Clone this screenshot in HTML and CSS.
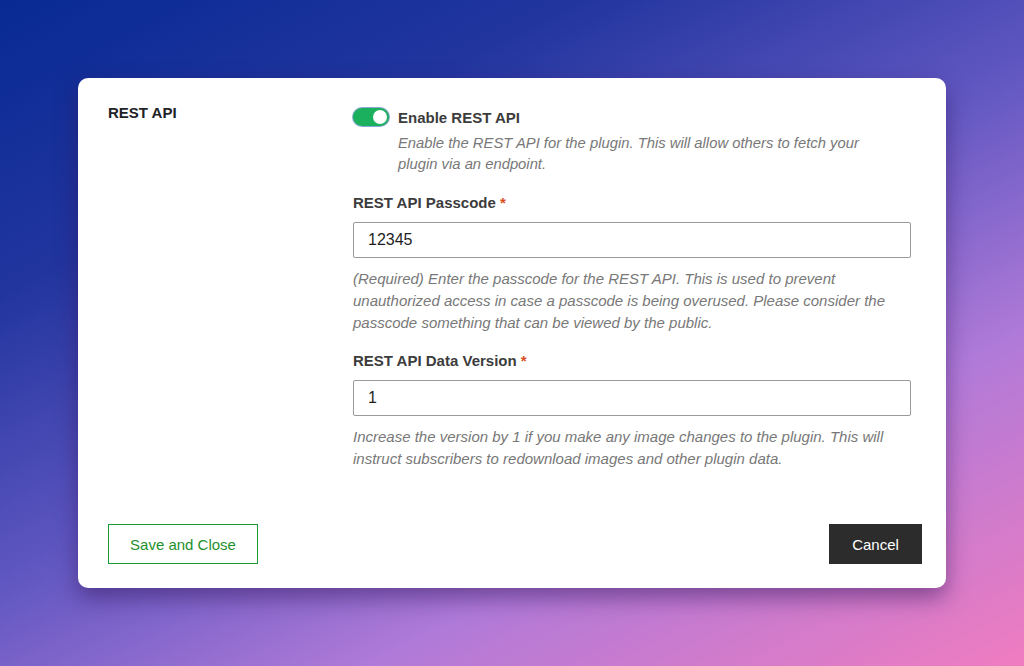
FILE: index.html
```html
<!DOCTYPE html>
<html lang="en">
<head>
<meta charset="utf-8">
<title>REST API settings</title>
<link rel="stylesheet" href="styles.css">
</head>
<body>
<div class="card">
  <div class="settings">
    <div class="section-title">REST API</div>
    <div class="fields">
      <div class="toggle-row">
        <span class="toggle"><span class="knob"></span></span>
        <span class="toggle-label">Enable REST API</span>
      </div>
      <p class="help help-toggle">Enable the REST API for the plugin. This will allow others to fetch your<br>plugin via an endpoint.</p>

      <label class="field-label">REST API Passcode <span class="req">*</span></label>
      <div class="input"><span>12345</span></div>
      <p class="help">(Required) Enter the passcode for the REST API. This is used to prevent<br>unauthorized access in case a passcode is being overused. Please consider the<br>passcode something that can be viewed by the public.</p>

      <label class="field-label second">REST API Data Version <span class="req">*</span></label>
      <div class="input"><span>1</span></div>
      <p class="help">Increase the version by 1 if you make any image changes to the plugin. This will<br>instruct subscribers to redownload images and other plugin data.</p>
    </div>
  </div>
  <div class="footer">
    <button class="btn btn-save">Save and Close</button>
    <button class="btn btn-cancel">Cancel</button>
  </div>
</div>
</body>
</html>
```

FILE: styles.css
```css
html, body {
  margin: 0;
  padding: 0;
}
body {
  width: 1024px;
  height: 666px;
  display: flex;
  align-items: center;
  justify-content: center;
  font-family: "Liberation Sans", Arial, sans-serif;
  background: linear-gradient(153deg, #082a93 0%, #22359f 25%, #6258c2 50%, #b07ad8 72%, #f07cc0 100%);
  overflow: hidden;
}
.card {
  box-sizing: border-box;
  width: 868px;
  height: 510px;
  background: #fff;
  border-radius: 10px;
  box-shadow: 0 10px 22px rgba(50, 20, 90, 0.5);
  padding: 25px 24px 24px 30px;
  display: flex;
  flex-direction: column;
}
.settings {
  display: grid;
  grid-template-columns: 245px 558px;
}
.section-title {
  font-size: 15px;
  font-weight: bold;
  line-height: 20px;
  color: #1d2327;
}
.fields {
  padding-top: 4px;
}
.toggle-row {
  display: flex;
  align-items: center;
  gap: 9px;
  height: 20px;
}
.toggle {
  box-sizing: border-box;
  width: 36px;
  height: 18px;
  border-radius: 9px;
  background: #1bb05d;
  box-shadow: 0 0 0 1px rgba(40, 100, 170, 0.55);
  display: flex;
  align-items: center;
  justify-content: flex-end;
  padding-right: 2px;
}
.knob {
  width: 14px;
  height: 14px;
  border-radius: 50%;
  background: #fff;
}
.toggle-label {
  font-size: 15px;
  font-weight: bold;
  color: #3c3c3c;
}
.help {
  margin: 0;
  font-size: 15px;
  font-style: italic;
  line-height: 22px;
  color: #787878;
  white-space: nowrap;
}
.help-toggle {
  margin-top: 6px;
  margin-left: 45px;
  line-height: 21px;
  font-size: 14.8px;
}
.field-label {
  display: block;
  margin-top: 18px;
  font-size: 15px;
  font-weight: bold;
  line-height: 20px;
  color: #3c3c3c;
}
.field-label.second {
  margin-top: 17px;
}
.req {
  color: #d9501e;
  font-size: 15px;
}
.input {
  box-sizing: border-box;
  margin-top: 9px;
  height: 36px;
  border: 1px solid #9a9a9a;
  border-radius: 2px;
  padding: 0 14px;
  display: flex;
  align-items: center;
  font-size: 16px;
  color: #1e1e1e;
  margin-bottom: 10px;
}
.footer {
  margin-top: auto;
  display: flex;
  justify-content: space-between;
}
.btn {
  font-family: "Liberation Sans", Arial, sans-serif;
  font-size: 15px;
  height: 40px;
  cursor: pointer;
  border-radius: 0;
}
.btn-save {
  width: 150px;
  background: #fff;
  color: #1f8f2e;
  border: 1px solid #1f9a2f;
}
.btn-cancel {
  width: 93px;
  background: #2c2c2c;
  color: #fff;
  border: 1px solid #2c2c2c;
}
```
